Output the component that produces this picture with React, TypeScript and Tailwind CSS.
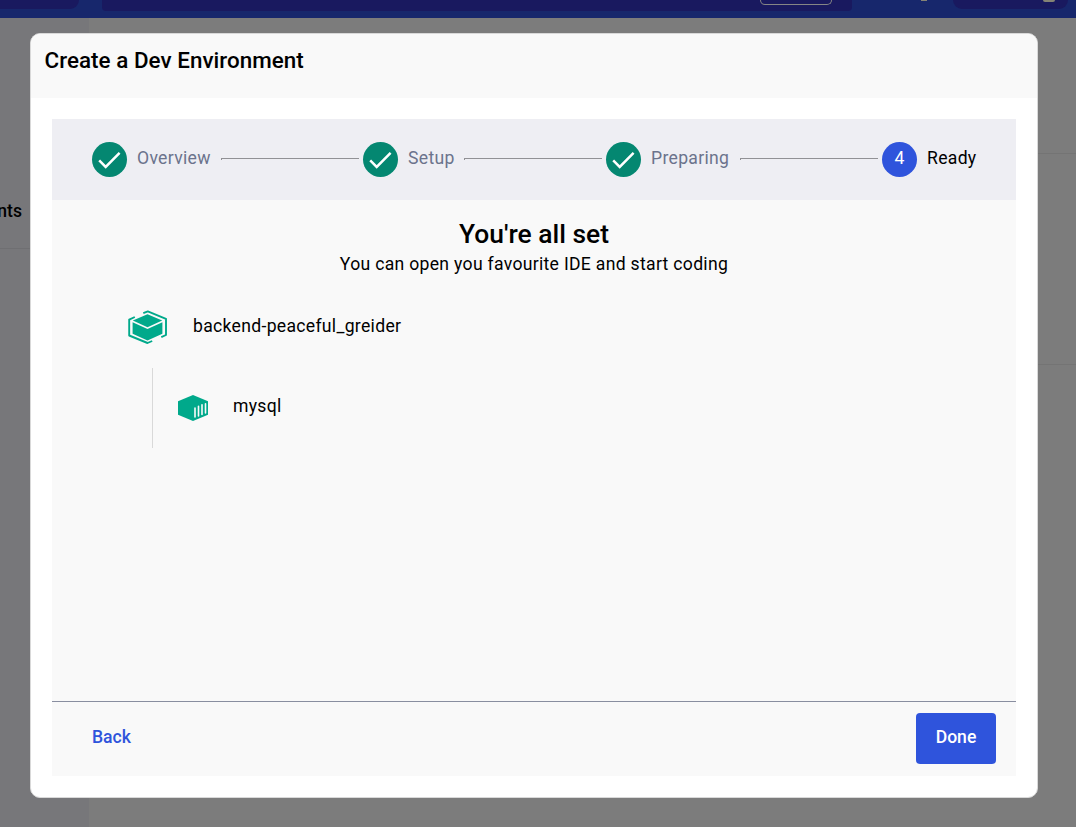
import { Fragment } from "react";

const steps = [
  { label: "Overview", width: "w-[84px]" },
  { label: "Setup", width: "w-[56px]" },
  { label: "Preparing", width: "w-[89px]" },
  { label: "Ready", width: "w-[49px]" },
];

function Check() {
  return (
    <svg width="35" height="35" viewBox="0 0 35 35" fill="none" stroke="#fff" strokeWidth="2.5">
      <path d="M7.2 18.4L13.7 25L27.6 10.9" />
    </svg>
  );
}

function Stepper() {
  return (
    <div className="flex h-[81px] items-start bg-[#eeeef3] px-10 pt-[23px] text-[17.6px] tracking-[0.3px]">
      {steps.map((step, i) => {
        const active = i === steps.length - 1;
        return (
          <Fragment key={step.label}>
            <div
              className={`h-[35px] w-[35px] shrink-0 rounded-full text-center leading-[33px] text-white ${active ? "bg-[#2f54dc]" : "bg-[#048771]"}`}
            >
              {active ? "4" : <Check />}
            </div>
            <div
              className={`ml-[10px] shrink-0 leading-[33px] whitespace-nowrap ${step.width} ${active ? "text-black" : "text-[#6b738c]"}`}
            >
              {step.label}
            </div>
            {!active && <div className="mt-4 mr-1 h-[2px] flex-1 border-t border-l border-[#919195]" />}
          </Fragment>
        );
      })}
    </div>
  );
}

function EnvironmentIcon() {
  return (
    <svg className="ml-[76px]" width="40" height="36" viewBox="128 310 40 36" fill="none">
      <path fill="#00a98b" d="M147.5 314.3L162.2 320.5L147.5 327.3L132.8 320.5ZM132.6 322.3L147.5 329.1L162.4 322.3V333.8L147.5 340.5L132.6 333.8Z" />
      <path
        stroke="#00a98b"
        strokeWidth="1.9"
        strokeLinejoin="round"
        d="M134.8 317L129.2 319.6V335.5L147.5 343L152.2 341M143.3 313.2L147.8 311.4L166 318.8V335L161.3 337.2"
      />
    </svg>
  );
}

function ServiceIcon() {
  return (
    <svg className="ml-6" width="32" height="28" viewBox="177 394 32 28">
      <path fill="#00a98b" d="M193 395L208 401.2V414.8L193 421L178 414.8V401.2Z" />
      <path stroke="#fafafa" strokeWidth="1.6" strokeLinecap="round" d="M195 408V417M198.5 406.2V416M202 404.8V414.5M205.5 403.8V413" />
    </svg>
  );
}

function Backdrop() {
  return (
    <div className="flex h-full flex-col bg-[#7c7c7c]">
      <header className="flex h-[18px] shrink-0 bg-[#17276c]">
        <div className="h-[9px] w-[79px] shrink-0 rounded-br-[18px] bg-[#19195f]" />
        <div className="ml-[23px] h-[11px] w-[750px] shrink-0 rounded-b-[4px] bg-[#19195f] pl-[658px]">
          <div className="h-[5px] w-[72px] rounded-b-[5px] border border-t-0 border-[#858585]" />
        </div>
        <div className="ml-[69px] h-px w-[6px] shrink-0 bg-[#858375]" />
        <div className="ml-[26px] h-[9px] w-[115px] shrink-0 rounded-b-[18px] bg-[#19195f] pl-[90px]">
          <div className="h-[2px] w-[12px] rounded-b-full bg-[#858375]" />
        </div>
      </header>
      <div className="flex flex-1">
        <aside className="w-[89px] shrink-0 bg-[#77777a]">
          <div className="flex h-[231px] w-[89px] justify-start border-b border-[#6f6f72] pt-[181px]">
            <span className="flex w-[22px] justify-end text-[17.6px] leading-6 font-medium text-black">nts</span>
          </div>
        </aside>
        <div className="flex-1 pt-[135px]">
          <div className="h-[212px] border-y border-[#747474]" />
        </div>
      </div>
    </div>
  );
}

export default function App() {
  return (
    <div className="relative h-[827px] w-[1076px] overflow-hidden font-['Roboto',sans-serif] text-black">
      <Backdrop />
      <div className="absolute top-[33px] left-[30px] flex h-[765px] w-[1008px] flex-col overflow-hidden rounded-[10px] border border-[#d9d9d9] bg-white">
        <div className="h-[64px] shrink-0 bg-[#f9f9f9] pt-[10px] pl-[13.5px] text-[22.4px] leading-8 font-medium tracking-[0.04px]">
          Create a Dev Environment
        </div>
        <div className="mx-[21px] mt-[21px] flex h-[657px] shrink-0 flex-col bg-[#f9f9f9]">
          <Stepper />
          <div className="flex-1">
            <h1 className="pt-[18px] text-center text-[26.4px] leading-8 font-medium">You're all set</h1>
            <p className="mt-[2px] text-center text-[17.6px] leading-6 tracking-[0.3px]">
              You can open you favourite IDE and start coding
            </p>
            <div className="mt-[34px] flex h-9 items-start text-[17.6px] tracking-[0.3px]">
              <EnvironmentIcon />
              <span className="ml-[25px] leading-[33px]">backend-peaceful_greider</span>
            </div>
            <div className="mt-[22px] ml-[100px] flex h-20 items-center border-l border-[#d9d9d9] text-[17.6px] tracking-[0.3px]">
              <ServiceIcon />
              <span className="-mt-[3px] ml-6">mysql</span>
            </div>
          </div>
          <div className="flex h-[75px] items-start justify-between border-t border-[#898ea0] pr-5 pl-10 text-[17.6px] font-medium">
            <button className="mt-[11px] h-[51px] pb-[2px] text-[#2f54dc]">Back</button>
            <button className="mt-[11px] h-[51px] w-20 rounded-[4px] bg-[#2f54dc] pb-[2px] text-white">Done</button>
          </div>
        </div>
      </div>
    </div>
  );
}
